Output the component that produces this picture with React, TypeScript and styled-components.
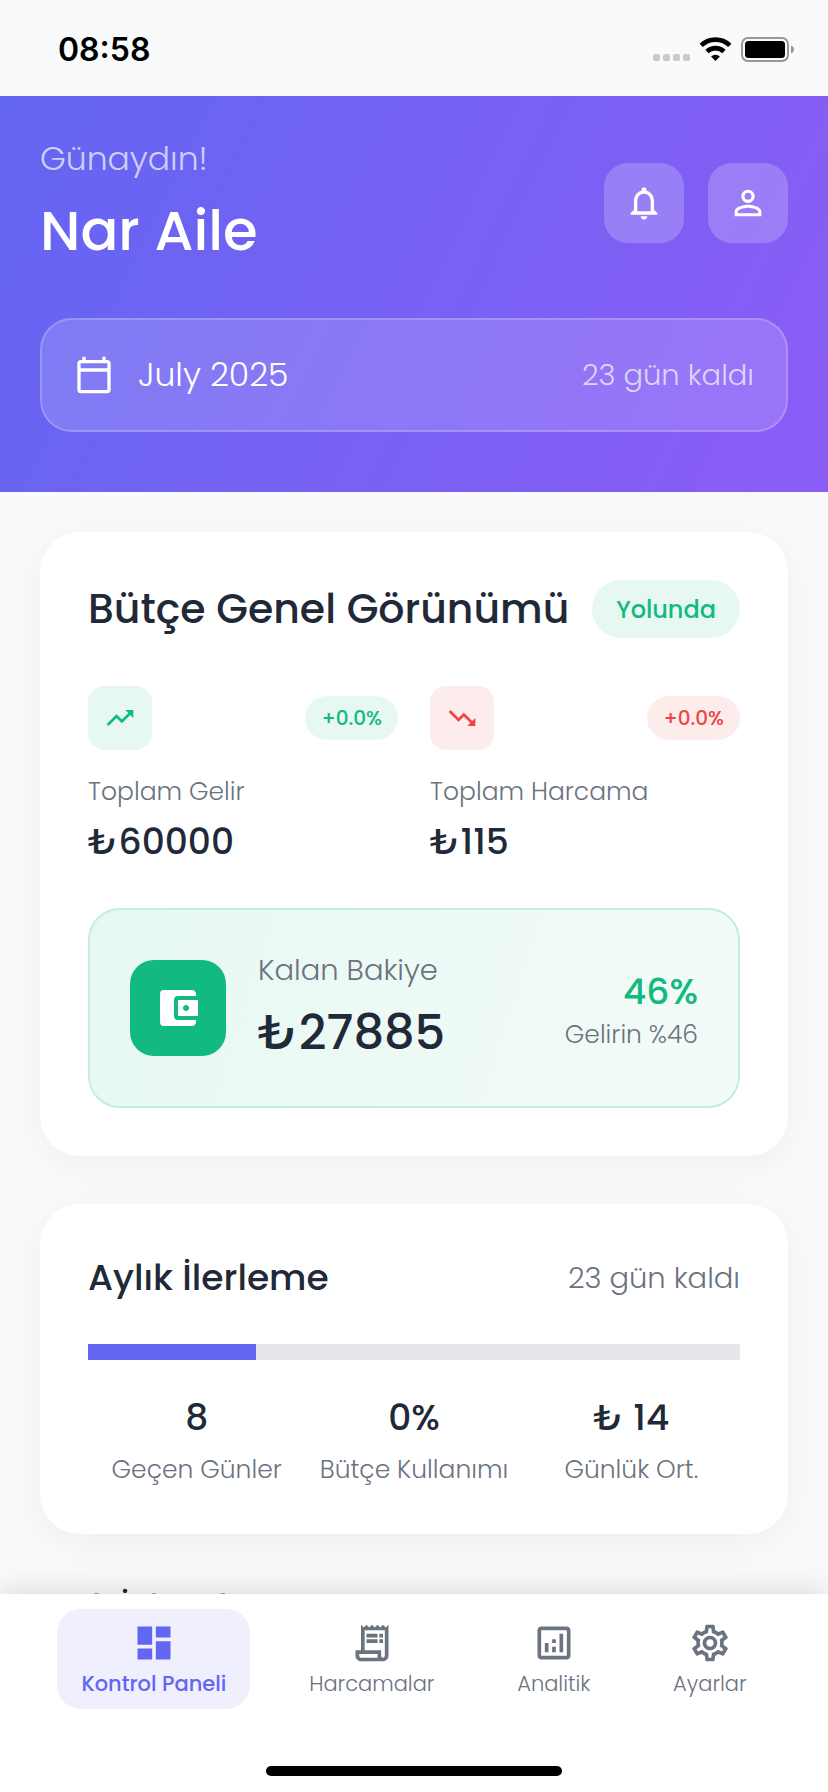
import React from "react";
import styled, { createGlobalStyle } from "styled-components";
import {
  MdAccountBalanceWallet,
  MdDashboard,
  MdOutlineAnalytics,
  MdOutlineCalendarToday,
  MdNotificationsNone,
  MdOutlineReceiptLong,
  MdOutlineSettings,
  MdPersonOutline,
  MdTrendingDown,
  MdTrendingUp,
} from "react-icons/md";

const color = {
  page: "#f9fafc",
  ink: "#1f2937",
  muted: "#6b7280",
  indigo: "#6366f1",
  violet: "#8b5cf6",
  green: "#12b981",
  greenSoft: "#e7f8f2",
  red: "#ef4444",
  redSoft: "#fdecec",
  track: "#e5e7eb",
};

const GlobalStyle = createGlobalStyle`
  *, *::before, *::after { box-sizing: border-box; }
  body {
    margin: 0;
    background: ${color.page};
    color: ${color.ink};
    font-family: Poppins, Inter, "Noto Sans", sans-serif;
    -webkit-font-smoothing: antialiased;
  }
  h1, h2, p, dl, dt, dd { margin: 0; }
  button { font-family: inherit; border: 0; }
  svg { display: block; flex: none; }
`;

const Screen = styled.div`
  display: flex;
  flex-direction: column;
  height: 100vh;
`;

const StatusBar = styled.div`
  display: flex;
  flex: none;
  align-items: center;
  justify-content: space-between;
  height: 96px;
  padding: 4px 34px 0 58px;
`;

const Clock = styled.time`
  color: #000;
  font-family: Inter, sans-serif;
  font-size: 32px;
  font-weight: 600;
  line-height: 40px;
`;

const StatusIcons = styled.svg`
  width: 144px;
  height: 28px;
`;

const Main = styled.main`
  flex: 1;
  min-height: 0;
  overflow: hidden;
`;

const Hero = styled.header`
  display: flex;
  flex-direction: column;
  gap: 48px;
  padding: 40px 40px 60px;
  background: linear-gradient(116deg, ${color.indigo}, ${color.violet});
  color: #fff;
`;

const HeroTop = styled.div`
  display: flex;
  align-items: center;
  justify-content: space-between;
`;

const Greeting = styled.p`
  margin-bottom: 10px;
  color: rgba(255, 255, 255, 0.7);
  font-size: 33px;
  font-weight: 300;
  line-height: 46px;
`;

const FamilyName = styled.h1`
  font-size: 56px;
  font-weight: 500;
  line-height: 78px;
`;

const HeroActions = styled.div`
  display: flex;
  gap: 24px;
`;

const RoundButton = styled.button`
  display: grid;
  place-items: center;
  width: 80px;
  height: 80px;
  padding: 0;
  border-radius: 24px;
  background: rgba(255, 255, 255, 0.2);
  color: #fff;
`;

const MonthBar = styled.div`
  display: flex;
  align-items: center;
  gap: 24px;
  padding: 32px;
  border: 2px solid rgba(255, 255, 255, 0.2);
  border-radius: 32px;
  background: rgba(255, 255, 255, 0.15);
`;

const MonthName = styled.span`
  flex: 1;
  font-size: 33px;
  font-weight: 300;
  line-height: 46px;
`;

const DaysLeft = styled.span<{ $onHero?: boolean }>`
  color: ${(p) => (p.$onHero ? "rgba(255, 255, 255, 0.7)" : color.muted)};
  font-size: 29px;
  font-weight: 300;
  line-height: 44px;
`;

const Content = styled.div`
  display: flex;
  flex-direction: column;
  gap: 48px;
  padding: 40px;
`;

const Card = styled.section`
  padding: 48px;
  border-radius: 40px;
  background: #fff;
  box-shadow: 0 8px 40px rgba(0, 0, 0, 0.05);
`;

const CardHead = styled.div<{ $space: number }>`
  display: flex;
  align-items: center;
  justify-content: space-between;
  margin-bottom: ${(p) => p.$space}px;
`;

const CardTitle = styled.h2<{ $large?: boolean }>`
  font-size: ${(p) => (p.$large ? 41 : 36)}px;
  font-weight: 500;
  line-height: 52px;
  white-space: nowrap;
`;

const StatusBadge = styled.span`
  padding: 11px 24px 9px;
  border-radius: 32px;
  background: ${color.greenSoft};
  color: ${color.green};
  font-size: 24px;
  font-weight: 500;
  line-height: 38px;
`;

const Totals = styled.div`
  display: grid;
  grid-template-columns: 1fr 1fr;
  gap: 32px;
  margin-bottom: 42px;
`;

const TotalHead = styled.div`
  display: flex;
  align-items: center;
  justify-content: space-between;
  margin-bottom: 25px;
`;

type Tone = "green" | "red";

const TrendBox = styled.span<{ $tone: Tone }>`
  display: grid;
  place-items: center;
  width: 64px;
  height: 64px;
  border-radius: 16px;
  background: ${(p) => (p.$tone === "green" ? color.greenSoft : color.redSoft)};
  color: ${(p) => color[p.$tone]};
`;

const ChangePill = styled.span<{ $tone: Tone }>`
  padding: 8px 16px;
  border-radius: 22px;
  background: ${(p) => (p.$tone === "green" ? color.greenSoft : color.redSoft)};
  color: ${(p) => color[p.$tone]};
  font-size: 20px;
  font-weight: 500;
  line-height: 28px;
`;

const Caption = styled.p`
  color: ${color.muted};
  font-size: 25px;
  font-weight: 300;
  line-height: 34px;
`;

const TotalAmount = styled.p`
  margin-top: 9px;
  font-size: 36px;
  font-weight: 500;
  line-height: 48px;
`;

const Balance = styled.div`
  display: flex;
  align-items: center;
  gap: 32px;
  padding: 39px 40px;
  border: 2px solid #c3eddf;
  border-radius: 32px;
  background: linear-gradient(107deg, #e7f8f2, #f3fbf8);
`;

const WalletBox = styled.span`
  display: grid;
  place-items: center;
  width: 96px;
  height: 96px;
  border-radius: 24px;
  background: ${color.green};
  color: #fff;
`;

const BalanceText = styled.div`
  flex: 1;
`;

const BalanceLabel = styled.p`
  margin-bottom: 8px;
  color: ${color.muted};
  font-size: 29px;
  font-weight: 300;
  line-height: 42px;
`;

const BalanceAmount = styled.p`
  font-size: 48px;
  font-weight: 500;
  line-height: 68px;
`;

const BalanceShare = styled.div`
  padding-top: 4px;
  text-align: right;
`;

const SharePercent = styled.p`
  margin-bottom: 2px;
  color: ${color.green};
  font-size: 36px;
  font-weight: 500;
  line-height: 48px;
`;

const Progress = styled.div`
  height: 16px;
  margin-bottom: 32px;
  background: ${color.track};
`;

const ProgressFill = styled.div`
  height: 100%;
  background: ${color.indigo};
`;

const Figures = styled.dl`
  display: grid;
  grid-template-columns: repeat(3, 1fr);
  text-align: center;
`;

const Figure = styled.div`
  display: flex;
  flex-direction: column-reverse;
  gap: 10px;
`;

const FigureValue = styled.dd`
  font-size: 36px;
  font-weight: 500;
  line-height: 52px;
`;

const FigureLabel = styled.dt`
  color: ${color.muted};
  font-size: 25px;
  font-weight: 300;
  line-height: 32px;
  white-space: nowrap;
`;

const BottomBar = styled.footer`
  z-index: 1;
  flex: none;
  padding: 15px 40px 16px;
  background: #fff;
  box-shadow: 0 0 32px rgba(0, 0, 0, 0.16);
`;

const Tabs = styled.nav`
  display: flex;
  justify-content: space-around;
  margin-bottom: 57px;
`;

const Tab = styled.button<{ $active?: boolean }>`
  display: flex;
  flex-direction: column;
  align-items: center;
  gap: 4px;
  padding: 12px 24px 10px;
  border-radius: 24px;
  background: ${(p) => (p.$active ? "#efeffe" : "transparent")};
  color: ${(p) => (p.$active ? color.indigo : color.muted)};
  font-size: 21px;
  font-weight: ${(p) => (p.$active ? 500 : 300)};
  line-height: 30px;
`;

const HomeIndicator = styled.div`
  width: 296px;
  height: 10px;
  margin: 0 auto;
  border-radius: 5px;
  background: #000;
`;

const totals = [
  { label: "Toplam Gelir", amount: "₺60000", tone: "green" as Tone, Icon: MdTrendingUp },
  { label: "Toplam Harcama", amount: "₺115", tone: "red" as Tone, Icon: MdTrendingDown },
];

const figures = [
  { label: "Geçen Günler", value: "8" },
  { label: "Bütçe Kullanımı", value: "0%" },
  { label: "Günlük Ort.", value: "₺ 14" },
];

const tabs = [
  { label: "Kontrol Paneli", Icon: MdDashboard },
  { label: "Harcamalar", Icon: MdOutlineReceiptLong },
  { label: "Analitik", Icon: MdOutlineAnalytics },
  { label: "Ayarlar", Icon: MdOutlineSettings },
];

const elapsedDays = 8;
const monthDays = 31;

export default function App() {
  const [active, setActive] = React.useState(0);

  return (
    <>
      <GlobalStyle />
      <Screen>
        <StatusBar>
          <Clock>08:58</Clock>
          <StatusIcons viewBox="0 0 144 28" aria-hidden="true">
            <g fill="#c9cacc">
              <rect x="3" y="18" width="7" height="7" rx="2" />
              <rect x="13" y="18" width="7" height="7" rx="2" />
              <rect x="23" y="18" width="7" height="7" rx="2" />
              <rect x="33" y="18" width="7" height="7" rx="2" />
            </g>
            <g fill="none" stroke="#000" strokeWidth="4.6">
              <path d="M51.2 9.4a20.5 20.5 0 0 1 28.6 0" />
              <path d="M57 15.5a12.3 12.3 0 0 1 17 0" />
            </g>
            <path d="M61.1 20.4a6.5 6.5 0 0 1 8.8 0L65.5 25z" fill="#000" />
            <rect x="92" y="2" width="46" height="23" rx="6" fill="none" stroke="#97989a" strokeWidth="2" />
            <rect x="95" y="5" width="40" height="17" rx="3.5" fill="#000" />
            <path d="M141 9.5c2 .7 3 2.2 3 4s-1 3.3-3 4z" fill="#97989a" />
          </StatusIcons>
        </StatusBar>

        <Main>
          <Hero>
            <HeroTop>
              <div>
                <Greeting>Günaydın!</Greeting>
                <FamilyName>Nar Aile</FamilyName>
              </div>
              <HeroActions>
                <RoundButton type="button" aria-label="Bildirimler">
                  <MdNotificationsNone size={40} />
                </RoundButton>
                <RoundButton type="button" aria-label="Profil">
                  <MdPersonOutline size={40} />
                </RoundButton>
              </HeroActions>
            </HeroTop>
            <MonthBar>
              <MdOutlineCalendarToday size={40} />
              <MonthName>July 2025</MonthName>
              <DaysLeft $onHero>23 gün kaldı</DaysLeft>
            </MonthBar>
          </Hero>

          <Content>
            <Card>
              <CardHead $space={48}>
                <CardTitle $large>Bütçe Genel Görünümü</CardTitle>
                <StatusBadge>Yolunda</StatusBadge>
              </CardHead>
              <Totals>
                {totals.map(({ label, amount, tone, Icon }) => (
                  <div key={label}>
                    <TotalHead>
                      <TrendBox $tone={tone}>
                        <Icon size={32} />
                      </TrendBox>
                      <ChangePill $tone={tone}>+0.0%</ChangePill>
                    </TotalHead>
                    <Caption>{label}</Caption>
                    <TotalAmount>{amount}</TotalAmount>
                  </div>
                ))}
              </Totals>
              <Balance>
                <WalletBox>
                  <MdAccountBalanceWallet size={48} />
                </WalletBox>
                <BalanceText>
                  <BalanceLabel>Kalan Bakiye</BalanceLabel>
                  <BalanceAmount>₺27885</BalanceAmount>
                </BalanceText>
                <BalanceShare>
                  <SharePercent>46%</SharePercent>
                  <Caption>Gelirin %46</Caption>
                </BalanceShare>
              </Balance>
            </Card>

            <Card>
              <CardHead $space={40}>
                <CardTitle>Aylık İlerleme</CardTitle>
                <DaysLeft>23 gün kaldı</DaysLeft>
              </CardHead>
              <Progress
                role="progressbar"
                aria-label="Aylık İlerleme"
                aria-valuenow={elapsedDays}
                aria-valuemax={monthDays}
              >
                <ProgressFill style={{ width: `${(elapsedDays / monthDays) * 100}%` }} />
              </Progress>
              <Figures>
                {figures.map(({ label, value }) => (
                  <Figure key={label}>
                    <FigureLabel>{label}</FigureLabel>
                    <FigureValue>{value}</FigureValue>
                  </Figure>
                ))}
              </Figures>
            </Card>

            <CardTitle>Hızlı İşlemler</CardTitle>
          </Content>
        </Main>

        <BottomBar>
          <Tabs>
            {tabs.map(({ label, Icon }, i) => (
              <Tab key={label} type="button" $active={i === active} onClick={() => setActive(i)}>
                <Icon size={44} />
                {label}
              </Tab>
            ))}
          </Tabs>
          <HomeIndicator />
        </BottomBar>
      </Screen>
    </>
  );
}
